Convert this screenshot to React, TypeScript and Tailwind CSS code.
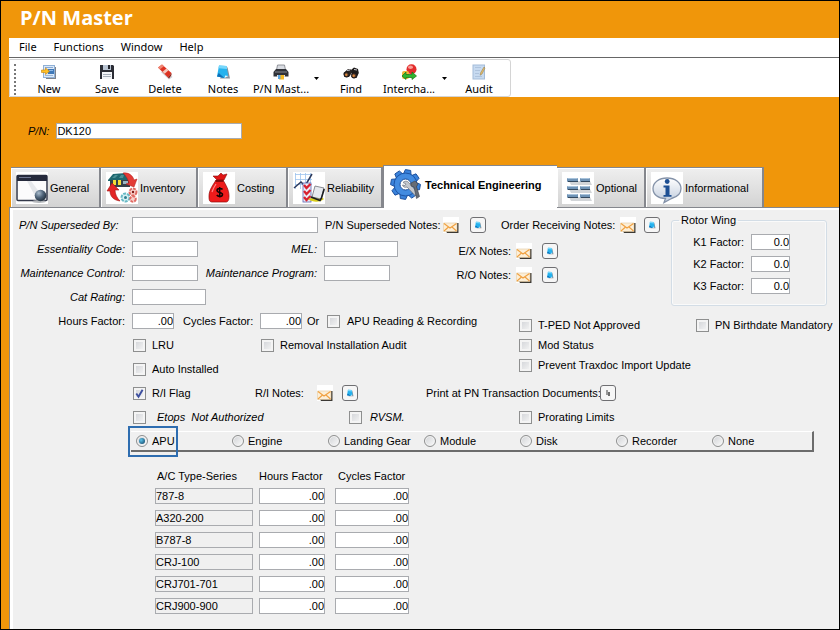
import React, { useState } from 'react';

const BOX = 'h-4 border border-[#a9abaf] bg-white text-[11px] leading-[14px] text-black outline-none';

/* ---------- toolbar icons ---------- */

const NewIcon = () => (
  <svg width="16" height="16" viewBox="0 0 16 16">
    <path d="M4 3h11v12H5z" fill="#7f838b" />
    <rect x="2.500" y="1.500" width="11" height="12" fill="#dce9f8" stroke="#8fb0d6" />
    <path d="M4 3.500h8" stroke="#86a9d4" />
    <rect x="7" y="5" width="6" height="5" fill="#3f78b8" />
    <path d="M8 6.500h4" stroke="#8fb9e6" />
    <path d="M4 11.500h8" stroke="#9db7d6" />
    <path d="M0.500 6h4V4L8.500 7.200l-4 3.300V8.500h-4z" fill="#ffc125" stroke="#c78208" strokeWidth="0.600" />
  </svg>
);

const SaveIcon = () => (
  <svg width="16" height="16" viewBox="0 0 16 16">
    <path d="M1 1h13l1 1v13H1z" fill="#2b2d35" />
    <rect x="4" y="1" width="8" height="5" fill="#b9c4d2" />
    <rect x="9" y="1" width="2" height="4" fill="#23252c" />
    <rect x="3" y="8" width="10" height="7" fill="#f3f5f8" />
    <path d="M4 10.500h8M4 12.500h8" stroke="#a7afba" />
  </svg>
);

const DeleteIcon = () => (
  <svg width="16" height="16" viewBox="0 0 16 16">
    <path d="M4 8l8 7.500 3.500-2.500L9 6z" fill="#a9a9ad" opacity="0.600" />
    <path d="M1 3.500L5 .5l9.500 8.500-3.500 4.500z" fill="#dd3323" />
    <path d="M1 3.500L5 .5l2 1.800-4 3z" fill="#f08774" />
    <path d="M5.500 7.700l4-3.200 2 1.700-3.800 3.500z" fill="#f6c9bd" />
    <path d="M11 13.500l3.500-4.500v2L12 14.500z" fill="#8c1d14" />
  </svg>
);

const NotesIcon = ({ size = 16 }: { size?: number }) => (
  <svg width={size} height={size} viewBox="0 0 16 16">
    <path d="M5 14.500h10L12.500 3z" fill="#8d9199" />
    <path d="M4 1.500L11.500 2l1.800 10L9.500 14 2 12.500z" fill="#25b2ee" />
    <path d="M4 1.500L11.500 2l.6 3-8.700-.8z" fill="#77d7fb" />
    <path d="M2 12.500l1.700-3.500 5.800 5z" fill="#0d6fb8" />
    <path d="M9.500 14l.7-2.500 3.100.5z" fill="#e8f6fd" />
  </svg>
);

const PrintIcon = () => (
  <svg width="16" height="16" viewBox="0 0 16 16">
    <path d="M4.500 1h7l1 5h-9z" fill="#d9dce2" stroke="#7b7e86" strokeWidth="0.800" />
    <path d="M3 5h10l2.500 3v4.500H.5V8z" fill="#303238" />
    <path d="M2 8h12" stroke="#85888f" />
    <path d="M4 11h8l-1 4.500H5z" fill="#fff" />
    <path d="M7 11h4v4.500H6z" fill="#f5b822" />
    <path d="M5 11h2.500v4H5z" fill="#5fa6df" />
  </svg>
);

const FindIcon = () => (
  <svg width="16" height="16" viewBox="0 0 16 16">
    <path d="M.5 9L5 5l3 .500 1.500 2.500-3.500 5H1.500z" fill="#2a2523" />
    <path d="M8 6l3-2.500 4 1.500.8 4-2.300 5H10z" fill="#1d1a1a" />
    <circle cx="3.600" cy="10.500" r="2.600" fill="#47342b" stroke="#1b1615" />
    <circle cx="11" cy="11.500" r="2.600" fill="#54372b" stroke="#1b1615" />
    <circle cx="3.300" cy="10.700" r="1.200" fill="#dd8a3d" />
    <circle cx="10.700" cy="11.700" r="1.200" fill="#dd8a3d" />
    <path d="M4 6.500l3-.500M11 5.500l3 .500" stroke="#c9c9cf" />
  </svg>
);

const InterchangeIcon = () => (
  <svg width="16" height="16" viewBox="0 0 16 16">
    <circle cx="10.500" cy="5.300" r="5" fill="#e32d2d" />
    <ellipse cx="9.500" cy="3.300" rx="2.500" ry="1.700" fill="#f79d96" />
    <rect x="1" y="7" width="7" height="8" rx="2" fill="#efb73a" />
    <path d="M1 12l4-4v2.500h6V8l4.500 4-4.500 3.500v-2H5v2z" fill="#2fb52f" stroke="#157315" strokeWidth="0.700" />
  </svg>
);

const AuditIcon = () => (
  <svg width="16" height="16" viewBox="0 0 16 16">
    <rect x="2" y="1" width="11.500" height="14" fill="#c7daf0" stroke="#a3bcd9" />
    <path d="M4 3.500h6M4 6.500h5M4 9.500h4M4 12.500h7" stroke="#aec3dd" />
    <path d="M13 3L9.500 9l-.3 2.200L11 10l3-6z" fill="#e8c069" stroke="#8d7444" strokeWidth="0.500" />
  </svg>
);

const Caret = () => (
  <svg width="5" height="3" viewBox="0 0 5 3">
    <path d="M0 0h5L2.500 3z" fill="#000" />
  </svg>
);

/* ---------- tab icons ---------- */

const GeneralIcon = () => (
  <svg width="32" height="32" viewBox="0 0 32 32">
    <defs>
      <radialGradient id="ball" cx="0.35" cy="0.3" r="0.8">
        <stop offset="0" stopColor="#a9bccd" />
        <stop offset="0.5" stopColor="#4c6075" />
        <stop offset="1" stopColor="#1d2833" />
      </radialGradient>
    </defs>
    <rect width="32" height="32" fill="#fff" />
    <rect x="1" y="3.500" width="30" height="25" rx="1" fill="#fbfbfc" stroke="#33384a" strokeWidth="1.500" />
    <rect x="1" y="3" width="30" height="6" fill="#252a3c" />
    <path d="M3 5.500h12" stroke="#6e7690" />
    <path d="M11 9h4l9 12-5 3z" fill="#e6e8eb" />
    <ellipse cx="23" cy="29.500" rx="7" ry="1.500" fill="#b5b8bc" />
    <circle cx="24.500" cy="23.500" r="5.800" fill="url(#ball)" />
  </svg>
);

const InventoryIcon = () => (
  <svg width="32" height="32" viewBox="0 0 32 32">
    <rect width="32" height="32" fill="#fff" />
    <path d="M2 8l5-6 13-1 5 6v2H2z" fill="#1f6870" />
    <path d="M6 6l3-3h3L9 6zM13 6l2-3h3l-1 3z" fill="#4b9297" />
    <rect x="4" y="8" width="20" height="7" fill="#35414a" />
    <rect x="7" y="8" width="3" height="5" fill="#f3dd34" />
    <rect x="12" y="8" width="3" height="5" fill="#f3dd34" />
    <rect x="17" y="9" width="5" height="3" fill="#9ab7c4" />
    <path d="M17 1c6-1 10 3 11 7l3-1-3 8-8-3 3-1c-1-4-3-7-6-10z" fill="#e33c36" stroke="#b01b1b" strokeWidth="0.500" />
    <path d="M14 29C7 28 4 24 4 19H1l5-8 7 7H9c0 4 2 8 5 11z" fill="#e32626" stroke="#a51414" strokeWidth="0.600" />
    <circle cx="19.500" cy="25.500" r="4" fill="#d7f0f3" stroke="#68bac6" strokeWidth="2" strokeDasharray="3 1" />
    <circle cx="19.500" cy="25.500" r="1.500" fill="#2f8190" />
    <circle cx="27" cy="20" r="3.500" fill="#f8d2ce" stroke="#e06a63" strokeWidth="2" strokeDasharray="3 1" />
    <circle cx="27" cy="27" r="2.800" fill="#f8d2ce" stroke="#e06a63" strokeWidth="2" strokeDasharray="3 1" />
    <circle cx="27" cy="20" r="1.200" fill="#7e1a15" />
  </svg>
);

const CostingIcon = () => (
  <svg width="32" height="32" viewBox="0 0 32 32">
    <rect width="32" height="32" fill="#fff" />
    <path d="M10 4l5 0 3-3 2 2 4-1-3 6h-7z" fill="#e01414" stroke="#8c0b0b" strokeWidth="0.600" />
    <path d="M13 8h7c3 5 6 10 6 16 0 4-1 6-3 6H9c-3 0-3-3-3-6 0-6 4-11 7-16z" fill="#ee1b1b" stroke="#8c0b0b" strokeWidth="0.700" />
    <path d="M12.500 9h8" stroke="#5e0505" strokeWidth="1.400" />
    <path d="M9 20c1-3 2-5 4-8" stroke="#ff8585" strokeWidth="1.200" fill="none" />
    <path d="M19.500 17.500c-1-1.500-5.500-1.500-5.500 1s5.500 1.500 5.500 4-4.500 2.500-5.700.5M16.700 15v10.500" stroke="#110303" strokeWidth="1.500" fill="none" />
  </svg>
);

const ReliabilityIcon = () => (
  <svg width="32" height="32" viewBox="0 0 32 32">
    <rect width="32" height="32" fill="#fff" />
    <path d="M2 2.500h17M2 7.500h17M2 12.500h17M2.500 1v16M7.500 1v16M12.500 1v16M17.500 1v16" stroke="#9cc3ee" strokeWidth="0.800" />
    <path d="M1 16l7-6 4 4 7-12" stroke="#2d3a5c" strokeWidth="1.500" fill="none" />
    <rect x="10" y="11" width="8" height="19" fill="#e9ebf7" stroke="#5b63b0" strokeWidth="0.800" />
    <path d="M11 13l2.500 3 4-4M11 19l2.500 3 4-4M11 25l2.500 3 4-4" stroke="#d9202f" strokeWidth="2.300" fill="none" />
    <path d="M15 27c5 4 13 3 16 0l-4-3z" fill="#d9cd18" />
    <path d="M22 14l9 2-3 11-9-2z" fill="#e6e9ee" stroke="#6d7179" strokeWidth="0.800" />
    <path d="M18 25l9 3.500 1.500-2.500 2.700-9" stroke="#1c1e22" strokeWidth="1.600" fill="none" />
  </svg>
);

const TEETH = [0, 45, 90, 135, 180, 225, 270, 315];

const EngineeringIcon = () => (
  <svg width="32" height="32" viewBox="0 0 32 32">
    {TEETH.map((deg) => (
      <path key={deg} d="M11.500 6L12.800 0.800h5.400L19.500 6z" fill="#3a83dc" stroke="#1b4f9c" strokeWidth="0.900" transform={`rotate(${deg + 10} 15.500 15.500)`} />
    ))}
    <circle cx="15.500" cy="15.500" r="11.500" fill="#3a83dc" stroke="#1b4f9c" strokeWidth="0.900" />
    <circle cx="15.500" cy="15.500" r="10.600" fill="#428be0" />
    <circle cx="15.500" cy="15.500" r="5.500" fill="#fff" stroke="#1b4f9c" strokeWidth="1" />
    <path d="M13 13.500c2-2 5-1.500 6 .5l9 10-2.500 3L17 18c-2 .8-4 0-4.500-2l2.500.5 1-1.500z" fill="#c3c7cd" stroke="#6d737c" strokeWidth="0.700" />
    <path d="M21 14l4-2 3 3-1.500 2.500 3 10-3 2L24 18l-3-1z" fill="#666c75" stroke="#3c4149" strokeWidth="0.600" />
  </svg>
);

const OptionalIcon = () => (
  <svg width="32" height="32" viewBox="0 0 32 32">
    <rect width="32" height="32" fill="#fff" />
    {[6, 14, 22].map((y) => (
      <g key={y}>
        <path d={`M7 ${y + 3}h21l2 4H9z`} fill="#d2d5d8" />
        <rect x="5" y={y} width="11" height="4" rx="1" fill="#6f93b5" />
        <rect x="18" y={y} width="10" height="4" rx="1" fill="#6f93b5" />
        <path d={`M6 ${y + 0.5}h9M19 ${y + 0.5}h8`} stroke="#a8c3dc" />
        <path d={`M6 ${y + 3.500}h10M19 ${y + 3.500}h9`} stroke="#34495e" />
      </g>
    ))}
  </svg>
);

const InfoIcon = () => (
  <svg width="32" height="32" viewBox="0 0 32 32">
    <defs>
      <linearGradient id="bubble" x1="0" y1="0" x2="0" y2="1">
        <stop offset="0" stopColor="#fff" />
        <stop offset="1" stopColor="#bfcbdc" />
      </linearGradient>
    </defs>
    <rect width="32" height="32" fill="#fff" />
    <path d="M16 6c8 0 14 4.500 14 10.500 0 5-4 8.500-9.500 10L13 30.500l1.500-4C7 26.500 2 22.500 2 16.500 2 10.500 8 6 16 6z" fill="url(#bubble)" stroke="#8492a8" strokeWidth="1.300" />
    <circle cx="16.200" cy="9.500" r="2.400" fill="#1d4f93" />
    <path d="M12.500 13.500h6V23h2v1.800h-8V23h2v-7.500h-2z" fill="#1d4f93" />
  </svg>
);

/* ---------- small form pieces ---------- */

const MailButton = ({ label }: { label: string }) => (
  <button aria-label={label} className="size-4 flex-none bg-white">
    <svg width="16" height="16" viewBox="0 0 16 16">
      <path d="M3 14h11V6h1.500v10H4z" fill="#3b3833" />
      <path d="M0.500 6h13.500v8.500H.5z" fill="#fcefd8" stroke="#e0c79d" strokeWidth="0.600" />
      <path d="M1 6.500l6 4.500 6.500-4.500M1 14l4.500-4M13.500 14L9 10" stroke="#f0a040" strokeWidth="1.100" fill="none" />
    </svg>
  </button>
);

const NoteButton = ({ label }: { label: string }) => (
  <button
    aria-label={label}
    className="flex size-4 flex-none items-center justify-center rounded-[3px] border border-[#6f6f72] bg-[#f6f6f6]"
  >
    <NotesIcon size={8} />
  </button>
);

type CheckProps = { label: string; checked?: boolean; italic?: boolean; gap?: string };

const Check: React.FC<CheckProps> = ({ label, checked = false, italic = false, gap = 'gap-[6px]' }) => (
  <label className={`flex items-center whitespace-nowrap ${gap} ${italic ? 'italic' : ''}`}>
    <span className="grid size-[13px] flex-none">
      <input
        type="checkbox"
        defaultChecked={checked}
        className="peer col-start-1 row-start-1 size-[13px] appearance-none border border-[#8e8f8f] bg-linear-to-br from-[#cfd1d5] to-[#f8f8f8] shadow-[inset_0_0_0_2px_#f4f4f4]"
      />
      <svg className="pointer-events-none invisible col-start-1 row-start-1 peer-checked:visible" width="13" height="13" viewBox="0 0 13 13">
        <path d="M3.300 6.500l2.200 3.200L9.600 2.800" stroke="#3d4f9f" strokeWidth="1.900" fill="none" />
      </svg>
    </span>
    {label}
  </label>
);

type FieldProps = {
  id: string;
  label: string;
  labelClass: string;
  inputClass: string;
  value?: string;
};

const Field: React.FC<FieldProps> = ({ id, label, labelClass, inputClass, value = '' }) => (
  <div className="flex flex-none items-center gap-[7px]">
    <label htmlFor={id} className={`whitespace-nowrap ${labelClass}`}>
      {label}
    </label>
    <input id={id} defaultValue={value} className={`${BOX} ${inputClass}`} />
  </div>
);

/* ---------- data ---------- */

const menus = ['File', 'Functions', 'Window', 'Help'];

const tools = [
  { label: 'New', icon: <NewIcon /> },
  { label: 'Save', icon: <SaveIcon /> },
  { label: 'Delete', icon: <DeleteIcon /> },
  { label: 'Notes', icon: <NotesIcon /> },
  { label: 'P/N Mast...', icon: <PrintIcon />, menu: true },
  { label: 'Find', icon: <FindIcon /> },
  { label: 'Intercha...', icon: <InterchangeIcon />, menu: true },
  { label: 'Audit', icon: <AuditIcon /> },
];

const tabs = [
  { label: 'General', icon: <GeneralIcon />, width: 'w-[90px]' },
  { label: 'Inventory', icon: <InventoryIcon />, width: 'w-[97px]' },
  { label: 'Costing', icon: <CostingIcon />, width: 'w-[90px]' },
  { label: 'Reliability', icon: <ReliabilityIcon />, width: 'w-[95px]' },
  { label: 'Technical Engineering', icon: <EngineeringIcon />, width: 'w-[174px]' },
  { label: 'Optional', icon: <OptionalIcon />, width: 'w-[89px]' },
  { label: 'Informational', icon: <InfoIcon />, width: 'w-[118px]' },
];

const categories = ['APU', 'Engine', 'Landing Gear', 'Module', 'Disk', 'Recorder', 'None'];

const series = ['787-8', 'A320-200', 'B787-8', 'CRJ-100', 'CRJ701-701', 'CRJ900-900'];

const App: React.FC = () => {
  const [activeTab, setActiveTab] = useState('Technical Engineering');
  const [category, setCategory] = useState('APU');

  return (
    <div className="flex min-h-screen flex-col border border-black bg-[#f0960a] pl-2 font-['Liberation_Sans',Arial,sans-serif] text-[11px] leading-[14px] text-black">
      <h1 className="flex h-[37px] items-center pb-1 pl-[11px] font-['Open_Sans','Segoe_UI',sans-serif] text-[20px] leading-none font-bold text-white">
        P/N Master
      </h1>

      <nav className="flex h-5 items-center gap-[17px] border-b border-[#666] bg-white pb-px pl-[10px] font-['Noto_Sans',Tahoma,sans-serif]">
        {menus.map((m) => (
          <button key={m}>{m}</button>
        ))}
      </nav>

      <div className="flex h-[39px] bg-white pt-px font-['Noto_Sans',Tahoma,sans-serif]">
        <div className="flex rounded-tr-[3px] rounded-br-[3px] border border-[#d4d4d4] pr-[2px] pl-1">
          <div className="mt-1 mr-[4px] mb-px w-0 border-l-2 border-dotted border-[#777]" />
          {tools.map((t) => (
            <div key={t.label} className="flex">
              <button className="flex w-[58px] flex-col items-center gap-[2px] pt-1">
                {t.icon}
                <span>{t.label}</span>
              </button>
              {t.menu && (
                <button aria-label={`${t.label} menu`} className="flex w-3 items-center justify-center">
                  <Caret />
                </button>
              )}
            </div>
          ))}
        </div>
      </div>

      <div className="flex h-[68px] items-center pb-px pl-[19px]">
        <Field id="pn" label="P/N:" labelClass="italic" inputClass="w-[186px]" value="DK120" />
      </div>

      <div role="tablist" className="flex items-end pl-[2px]">
        {tabs.map((t) =>
          t.label === activeTab ? (
            <button
              key={t.label}
              role="tab"
              aria-selected
              className={`relative -mb-px flex h-[43px] flex-none items-center gap-[3px] whitespace-nowrap border-t border-l border-[#85878d] bg-white pb-[5px] pl-[6px] font-bold ${t.width}`}
            >
              {t.icon}
              {t.label}
            </button>
          ) : (
            <button
              key={t.label}
              role="tab"
              aria-selected={false}
              onClick={() => setActiveTab(t.label)}
              className={`flex h-10 flex-none items-center gap-[2px] whitespace-nowrap border-t border-r-2 border-[#85878d] bg-linear-to-b from-[#efefef] to-[#d3d3d3] pl-[5px] shadow-[inset_1px_1px_0_#fff] ${t.width}`}
            >
              {t.icon}
              {t.label}
            </button>
          )
        )}
      </div>

      <div className="flex flex-1 flex-col border-t border-l border-[#85878d]">
        <main className="flex-1 border-t-2 border-l-3 border-white bg-[#f0f0f0] pt-[3px] pl-[6px]">
          <div className="flex">
            <div className="w-[652px] flex-none">
              <div className="flex h-6 items-center">
                <Field id="supersededBy" label="P/N Superseded By:" labelClass="w-[106px] italic" inputClass="w-[186px]" />
                <span className="ml-[7px] w-[118px] whitespace-nowrap">P/N Superseded Notes:</span>
                <MailButton label="P/N Superseded Notes mail" />
                <span className="w-[11px]" />
                <NoteButton label="P/N Superseded Notes" />
                <span className="ml-[15px] w-[119px] whitespace-nowrap">Order Receiving Notes:</span>
                <MailButton label="Order Receiving Notes mail" />
                <span className="w-2" />
                <NoteButton label="Order Receiving Notes" />
              </div>
              <div className="flex h-6 items-center">
                <Field id="essentiality" label="Essentiality Code:" labelClass="w-[106px] text-right italic" inputClass="w-[66px]" />
                <Field id="mel" label="MEL:" labelClass="w-[119px] text-right italic" inputClass="w-[74px]" />
                <div className="flex items-center pt-[3px]">
                  <span className="w-[113px] text-right">E/X Notes:</span>
                  <span className="w-[5px]" />
                  <MailButton label="E/X Notes mail" />
                  <span className="w-[10px]" />
                  <NoteButton label="E/X Notes" />
                </div>
              </div>
              <div className="flex h-6 items-center">
                <Field id="maintControl" label="Maintenance Control:" labelClass="w-[106px] text-right italic" inputClass="w-[66px]" />
                <Field id="maintProgram" label="Maintenance Program:" labelClass="w-[119px] text-right italic" inputClass="w-[66px]" />
                <div className="flex items-center pt-[3px]">
                  <span className="w-[121px] text-right">R/O Notes:</span>
                  <span className="w-[5px]" />
                  <MailButton label="R/O Notes mail" />
                  <span className="w-[10px]" />
                  <NoteButton label="R/O Notes" />
                </div>
              </div>
              <div className="flex h-6 items-center">
                <Field id="catRating" label="Cat Rating:" labelClass="w-[106px] text-right italic" inputClass="w-[74px]" />
              </div>
            </div>

            <fieldset className="h-[93px] w-[156px] flex-none rounded-[3px] border border-[#d3dde6] px-[9px] shadow-[inset_0_0_0_1px_#fafafa]">
              <legend className="-ml-[2px] px-[2px]">Rotor Wing</legend>
              <div className="flex flex-col items-end gap-[6px] pt-[7px] pr-[27px]">
                {['K1', 'K2', 'K3'].map((k) => (
                  <Field key={k} id={k} label={`${k} Factor:`} labelClass="" inputClass="w-[39px] text-right" value="0.0" />
                ))}
              </div>
            </fieldset>
          </div>

          <div className="flex">
            <div className="w-[500px] flex-none">
              <div className="flex h-6 items-center">
                <Field id="hours" label="Hours Factor:" labelClass="w-[106px] text-right" inputClass="w-[42px] text-right" value=".00" />
                <span className="w-[9px]" />
                <Field id="cycles" label="Cycles Factor:" labelClass="w-[70px]" inputClass="w-[42px] text-right" value=".00" />
                <span className="w-[25px] pl-[5px]">Or</span>
                <Check label="APU Reading & Recording" gap="gap-[7px]" />
              </div>
              <div className="flex h-6 items-center pl-[114px]">
                <div className="w-32">
                  <Check label="LRU" />
                </div>
                <Check label="Removal Installation Audit" />
              </div>
              <div className="flex h-6 items-center pl-[114px]">
                <Check label="Auto Installed" />
              </div>
            </div>
            <div className="grid flex-none auto-rows-[20px] grid-cols-[177px_auto] items-center pt-[6px]">
              <Check label="T-PED Not Approved" />
              <Check label="PN Birthdate Mandatory" />
              <div className="col-span-2">
                <Check label="Mod Status" />
              </div>
              <div className="col-span-2">
                <Check label="Prevent Traxdoc Import Update" />
              </div>
            </div>
          </div>

          <div className="flex h-6 items-center pl-[114px]">
            <div className="w-[122px]">
              <Check label="R/I Flag" checked />
            </div>
            <span className="w-[62px]">R/I Notes:</span>
            <MailButton label="R/I Notes mail" />
            <span className="w-[9px]" />
            <NoteButton label="R/I Notes" />
            <span className="ml-[68px] w-[174px] whitespace-nowrap">Print at PN Transaction Documents:</span>
            <button
              aria-label="Print at PN Transaction Documents"
              className="flex size-4 items-center justify-center rounded-[3px] border border-[#6f6f72] bg-[#f6f6f6]"
            >
              <svg width="6" height="8" viewBox="0 0 6 8">
                <path d="M1 1h2v5H1z" fill="#9a9a9a" />
                <path d="M3 3h2v4H3z" fill="#6d6d6d" />
              </svg>
            </button>
          </div>
          <div className="flex h-6 items-center pl-[114px]">
            <div className="w-[216px]">
              <Check label={'Etops\u00a0\u00a0Not Authorized'} italic gap="gap-[11px]" />
            </div>
            <div className="w-[170px]">
              <Check label="RVSM." italic gap="gap-2" />
            </div>
            <Check label="Prorating Limits" />
          </div>

          <div className="relative mt-[2px] ml-[112px] flex h-[21px] w-[683px] items-center border-t border-r-2 border-b-2 border-t-white border-r-[#6c6c6c] border-b-[#6c6c6c] pl-[5px]">
            {categories.map((c) => (
              <label key={c} className="flex w-24 items-center gap-1 whitespace-nowrap">
                <span className="grid size-3 flex-none place-items-center">
                  <input
                    type="radio"
                    name="category"
                    checked={category === c}
                    onChange={() => setCategory(c)}
                    className="peer col-start-1 row-start-1 size-3 appearance-none rounded-full border border-[#8e8f8f] bg-linear-to-br from-[#d0d2d5] to-[#fbfbfb] shadow-[inset_0_0_0_1px_#f4f4f4]"
                  />
                  <span className="pointer-events-none invisible col-start-1 row-start-1 size-[6px] rounded-full bg-radial-[at_35%_35%] from-[#5fc4ea] to-[#0b3a5c] peer-checked:visible" />
                </span>
                {c}
              </label>
            ))}
            <div className="pointer-events-none absolute -top-[6px] -left-[3px] h-[31px] w-[50px] border-2 border-[#2e6db0]" />
          </div>

          <table className="mt-[17px] ml-[136px] border-collapse">
            <thead>
              <tr className="h-4 align-top">
                <th className="w-[104px] pl-[2px] text-left font-normal">A/C Type-Series</th>
                <th className="w-[76px] text-left font-normal">Hours Factor</th>
                <th className="w-[76px] pl-[3px] text-left font-normal">Cycles Factor</th>
              </tr>
            </thead>
            <tbody>
              {series.map((s) => (
                <tr key={s} className="h-[22px]">
                  <td>
                    <input readOnly aria-label="A/C Type-Series" value={s} className="block h-4 w-[98px] border border-[#a9abaf] bg-[#f0f0f0] text-[11px] leading-[14px] outline-none" />
                  </td>
                  <td>
                    <input aria-label={`${s} Hours Factor`} defaultValue=".00" className={`${BOX} block w-[66px] text-right`} />
                  </td>
                  <td>
                    <input aria-label={`${s} Cycles Factor`} defaultValue=".00" className={`${BOX} block w-[74px] text-right`} />
                  </td>
                </tr>
              ))}
            </tbody>
          </table>
        </main>
      </div>
    </div>
  );
};

export default App;
